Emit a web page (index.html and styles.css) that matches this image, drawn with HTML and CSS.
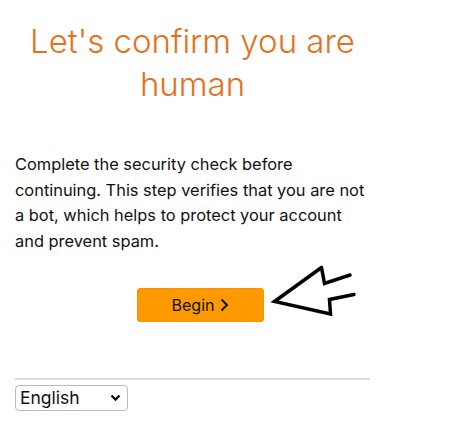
FILE: index.html
```html
<!DOCTYPE html>
<html>
<head>
<meta charset="utf-8">
<link rel="stylesheet" href="styles.css">
</head>
<body>
<div class="page">
  <h1 class="title">Let's confirm you are human</h1>
  <p class="desc">Complete the security check before continuing. This step verifies that you are not a bot, which helps to protect your account and prevent spam.</p>
  <div class="actions">
    <button class="begin">Begin <svg class="chev" width="9" height="14" viewBox="0 0 9 14"><path d="M1.5 1.5 L7 7 L1.5 12.5" fill="none" stroke="#111" stroke-width="2"/></svg></button>
  </div>
  <hr class="sep">
  <div class="lang">
    <span>English</span>
    <svg width="11" height="8" viewBox="0 0 11 8"><path d="M1.5 1.5 L5.5 5.5 L9.5 1.5" fill="none" stroke="#111" stroke-width="2.4"/></svg>
  </div>
</div>
<svg class="arrow" width="462" height="426" viewBox="0 0 462 426">
  <path d="M321.5 267.5 L274.5 301.5 L330.5 314 L329.5 299.5 L354 294.5 M321.5 267.5 L324.5 283.5 L350 275" fill="none" stroke="#000" stroke-width="3.5" stroke-linejoin="miter" stroke-linecap="round"/>
</svg>
</body>
</html>
```
FILE: styles.css
```css
html, body { margin: 0; padding: 0; background: #fff; }
body { font-family: Inter, Roboto, sans-serif; color: #111; }
.page { width: 355px; margin-left: 15px; padding-top: 20px; }
.title {
  margin: 0;
  text-align: center;
  font-weight: 300;
  font-size: 33px;
  line-height: 43px;
  color: #e5711c;
}
.desc {
  margin: 46px 0 0;
  font-size: 16.4px;
  line-height: 25.7px;
  color: #111;
}
.actions { display: flex; justify-content: center; margin-top: 33px; }
.begin {
  width: 127px; height: 34px;
  background: #fe9a00;
  border: 1px solid #f59300;
  border-radius: 3px;
  font-family: inherit; font-size: 16px; color: #111;
  display: flex; align-items: center; justify-content: center; gap: 6px;
  margin-left: 16px;
}
.sep { border: 0; border-top: 2px solid #ddd; margin: 56px 0 5px; }
.lang {
  box-sizing: border-box;
  width: 113px; height: 26px;
  font-size: 17.5px; color: #111;
  border: 1px solid #bbb; border-radius: 4px; background: #fff;
  display: flex; align-items: center; justify-content: space-between;
  padding: 0 6px 0 4px;
}
.arrow { position: absolute; left: 0; top: 0; pointer-events: none; }
```
